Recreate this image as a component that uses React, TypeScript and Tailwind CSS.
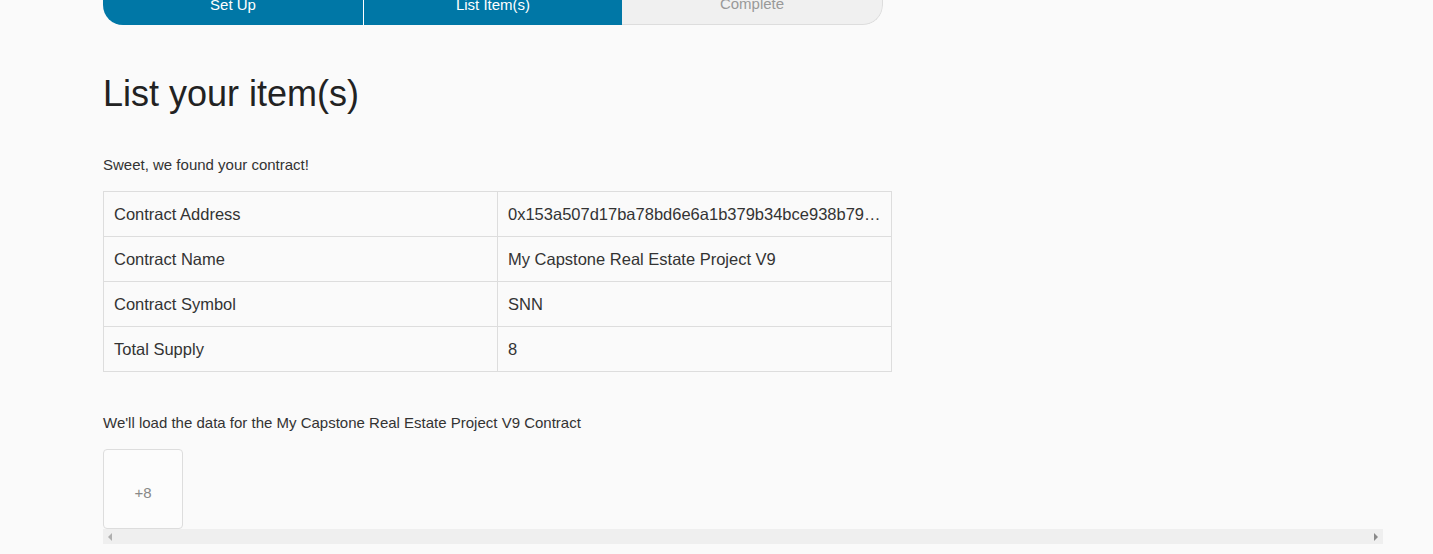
import React from "react";

const rows: [string, string][] = [
  ["Contract Address", "0x153a507d17ba78bd6e6a1b379b34bce938b79a3f5c2d1e"],
  ["Contract Name", "My Capstone Real Estate Project V9"],
  ["Contract Symbol", "SNN"],
  ["Total Supply", "8"],
];

export default function App() {
  return (
    <div
      className="min-h-screen w-full overflow-hidden bg-[#fafafa] text-[#333]"
      style={{ fontFamily: '"Liberation Sans", Arial, sans-serif' }}
    >
      <div className="pl-[103px] w-[1383px]">
        {/* Stepper */}
        <div className="-mt-[15px] flex h-[40px] w-[780px] overflow-hidden rounded-b-[20px] text-[15px]">
          <div className="flex w-[260px] items-center justify-center bg-[#0077a6] text-white">Set Up</div>
          <div className="w-px bg-white" />
          <div className="flex w-[258px] items-center justify-center bg-[#0077a6] text-white">List Item(s)</div>
          <div className="flex flex-1 items-center justify-center rounded-br-[20px] border-r border-b border-[#dddddd] bg-[#f0f0f0] text-[#999]">
            Complete
          </div>
        </div>

        <h1 className="mt-[49px] text-[36px] leading-[40px] text-[#222]">List your item(s)</h1>

        <p className="mt-[40px] text-[15px] leading-[21px]">Sweet, we found your contract!</p>

        <table className="mt-[16px] w-[789px] table-fixed border-collapse text-[16.5px]">
          <tbody>
            {rows.map(([k, v]) => (
              <tr key={k}>
                <td className="h-[45px] border border-[#dddddd] px-[10px] align-middle">{k}</td>
                <td className="h-[45px] overflow-hidden text-ellipsis whitespace-nowrap border border-[#dddddd] px-[10px] align-middle">
                  {v}
                </td>
              </tr>
            ))}
          </tbody>
        </table>

        <p className="mt-[40px] text-[15px] leading-[21px]">
          We'll load the data for the My Capstone Real Estate Project V9 Contract
        </p>

        <div className="mt-[16px] w-[1280px]">
          <div className="flex h-[80px] w-[80px] items-center justify-center rounded-[4px] border border-[#dddddd] bg-[#fcfcfc] pt-[8px] text-[15px] text-[#888]">
            +8
          </div>
          <div className="flex h-[15px] items-center justify-between bg-[#efefef] px-[5px]">
            <div className="h-0 w-0 border-y-[4px] border-r-[4px] border-y-transparent border-r-[#b0b0b0]" />
            <div className="h-0 w-0 border-y-[4px] border-l-[4px] border-y-transparent border-l-[#8a8a8a]" />
          </div>
        </div>
      </div>
    </div>
  );
}
